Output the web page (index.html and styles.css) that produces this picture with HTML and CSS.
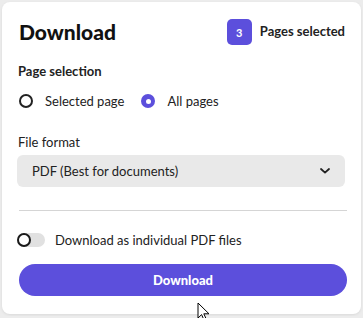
FILE: index.html
```html
<!DOCTYPE html>
<html lang="en">
<head>
    <meta charset="UTF-8">
    <meta name="viewport" content="width=device-width, initial-scale=1.0">
    <title>Download</title>
    <link rel="stylesheet" href="styles.css">
</head>
<body>
    <div class="card">
        <div class="card-head">
            <h1>Download</h1>
            <div class="selected-info">
                <span class="badge">3</span>
                <span class="selected-text">Pages selected</span>
            </div>
        </div>

        <div class="label label-first">Page selection</div>
        <div class="radio-row">
            <label class="radio-opt">
                <span class="radio"></span>
                <span>Selected page</span>
            </label>
            <label class="radio-opt">
                <span class="radio checked"></span>
                <span>All pages</span>
            </label>
        </div>

        <div class="label label-format">File format</div>
        <div class="select">
            <span>PDF (Best for documents)</span>
            <svg class="chevron" width="10" height="6" viewBox="0 0 10 6">
                <path d="M1 1l4 3.6L9 1" fill="none" stroke="#222" stroke-width="1.8" stroke-linecap="round" stroke-linejoin="round"/>
            </svg>
        </div>

        <div class="divider"></div>

        <div class="toggle-row">
            <span class="toggle"><span class="knob"></span></span>
            <span>Download as individual PDF files</span>
        </div>

        <button class="download-btn">Download</button>
    </div>

    <svg class="cursor" width="14" height="20" viewBox="0 0 14 20">
        <path d="M1 1v15l3.6-3.4 2.6 5.8 2.2-1-2.6-5.6H12z" fill="#fff" stroke="#000" stroke-width="1"/>
    </svg>
</body>
</html>
```

FILE: styles.css
```css
body {
    margin: 0;
    background-color: #ececec;
    font-family: Lato, "Noto Sans", sans-serif;
    color: #222;
}

.card {
    margin: 2px;
    width: 359px;
    height: 312px;
    box-sizing: border-box;
    padding: 17px 14px 0 16px;
    background-color: #fff;
    border-radius: 8px;
    box-shadow: 0 1px 3px rgba(0,0,0,0.08);
    display: flex;
    flex-direction: column;
}

.card-head {
    height: 26px;
    display: flex;
    align-items: center;
    justify-content: space-between;
}

.card-head h1 {
    margin: 0 0 0 1px;
    font-size: 21px;
    font-weight: 900;
    line-height: 26px;
    color: #111;
}

.selected-info {
    display: flex;
    align-items: center;
    margin-right: 2px;
}

.badge {
    width: 25px;
    height: 26px;
    border-radius: 5px;
    background-color: #5c4fdc;
    color: #fff;
    font-size: 11px;
    font-weight: 700;
    display: flex;
    align-items: center;
    justify-content: center;
}

.selected-text {
    margin-left: 8px;
    margin-top: -3px;
    font-size: 13px;
    font-weight: 700;
}

.label {
    font-size: 13px;
    line-height: 18px;
}

.label-first {
    margin-top: 17px;
    font-weight: 700;
}

.label-format {
    margin-top: 22px;
}

.radio-row {
    margin-top: 11px;
    height: 20px;
    display: flex;
    align-items: center;
    gap: 17px;
    margin-left: 1px;
    font-size: 13px;
}

.radio-opt {
    display: flex;
    align-items: center;
    gap: 12px;
}

.radio {
    width: 14px;
    height: 14px;
    box-sizing: border-box;
    border: 2px solid #222;
    border-radius: 50%;
    background: #fff;
}

.radio.checked {
    border: none;
    background: #5c4fdc;
    display: flex;
    align-items: center;
    justify-content: center;
}

.radio.checked::after {
    content: "";
    width: 5px;
    height: 5px;
    border-radius: 50%;
    background: #fff;
}

.select {
    margin-top: 4px;
    margin-left: -1px;
    width: 328px;
    height: 32px;
    box-sizing: border-box;
    padding: 0 15px;
    background-color: #e9e9e9;
    border-radius: 6px;
    display: flex;
    align-items: center;
    justify-content: space-between;
    font-size: 13px;
}

.divider {
    margin-top: 23px;
    margin-left: 1px;
    width: 328px;
    height: 1px;
    background-color: #d5d5d5;
}

.toggle-row {
    margin-top: 19px;
    height: 20px;
    display: flex;
    align-items: center;
    gap: 10px;
    font-size: 13px;
}

.toggle {
    width: 28px;
    height: 14px;
    margin-left: -1px;
    border-radius: 7px;
    background-color: #e1e1e1;
    display: flex;
}

.knob {
    width: 14px;
    height: 14px;
    box-sizing: border-box;
    border: 2px solid #1a1a1a;
    border-radius: 50%;
    background: #fff;
}

.download-btn {
    margin-top: 14px;
    margin-left: 1px;
    width: 328px;
    height: 32px;
    border: none;
    border-radius: 16px;
    background-color: #5c4fdc;
    color: #fff;
    font-family: inherit;
    font-size: 13px;
    font-weight: 900;
    cursor: pointer;
}

.cursor {
    position: absolute;
    left: 197px;
    top: 302px;
}
```
